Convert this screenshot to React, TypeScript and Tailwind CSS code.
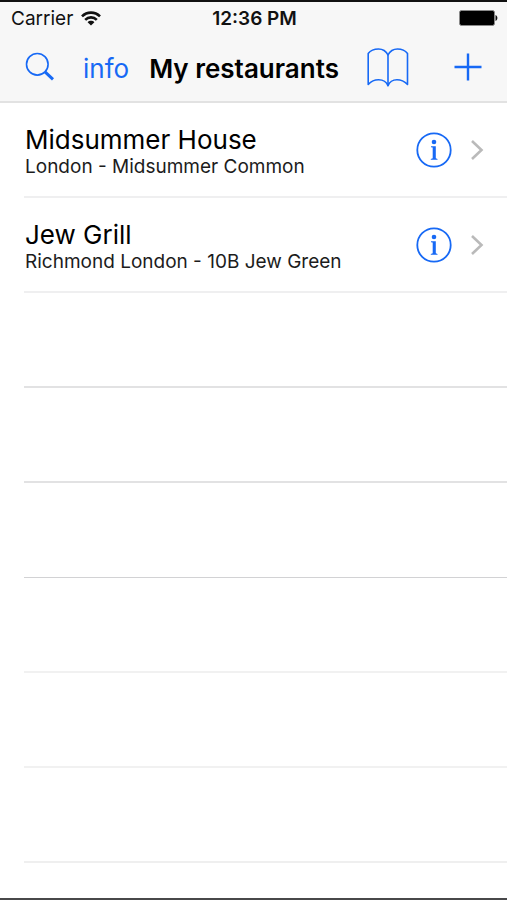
import React from 'react';

type Restaurant = {
  id: number;
  name: string;
  address: string;
};

const restaurants: Restaurant[] = [
  { id: 1, name: 'Midsummer House', address: 'London - Midsummer Common' },
  { id: 2, name: 'Jew Grill', address: 'Richmond London - 10B Jew Green' },
];

const emptyRows = [
  'border-b-2 border-[#e2e2e3]',
  'border-b-2 border-[#e2e2e3]',
  'border-b border-[#d2d2d4]',
  'border-b-2 border-[#f1f1f1]',
  'border-b-2 border-[#f1f1f1]',
  'border-b-2 border-[#efefef]',
];

function WifiIcon() {
  return (
    <svg width="20" height="15" viewBox="0 0 20 15" fill="none" stroke="#111" strokeWidth="2.6" aria-hidden="true">
      <path d="M1 5.4C6 0.4 14 0.4 19 5.4" />
      <path d="M4.2 8.8C7.4 5.6 12.6 5.6 15.8 8.8" />
      <path d="M10 14.4L6.6 11.2C8.4 9.4 11.6 9.4 13.4 11.2Z" fill="#111" stroke="none" />
    </svg>
  );
}

function BatteryIcon() {
  return (
    <svg width="39" height="16" viewBox="0 0 39 16" aria-hidden="true">
      <rect x="0.5" y="0.5" width="35" height="15" rx="2" fill="#000" stroke="#8a8a8a" />
      <path d="M36.5 5C39 6 39 10 36.5 11Z" fill="#111" />
    </svg>
  );
}

function SearchIcon() {
  return (
    <svg width="30" height="30" viewBox="0 0 30 30" fill="none" stroke="#1769f5" aria-hidden="true">
      <circle cx="12.3" cy="12.3" r="10.8" strokeWidth="1.6" />
      <path d="M20 19.8L28 27.4" strokeWidth="3" />
    </svg>
  );
}

function BookIcon() {
  return (
    <svg width="42" height="40" viewBox="0 0 42 40" fill="none" stroke="#1769f5" strokeWidth="1.6" strokeLinejoin="round" aria-hidden="true">
      <path d="M21 8C19 4 15.5 2 11.5 2C7 2 3.5 3.5 1.2 6.5V37.5C4 34.5 7.5 32.8 11.5 32.8C16 32.8 19.5 35 21 38.8C22.5 35 26 32.8 30 32.8C34 32.8 37.5 34.5 40.5 37.5V6.5C38.2 3.5 35 2 30.5 2C26.5 2 23 4 21 8Z" />
      <path d="M21 8V38.8" />
    </svg>
  );
}

function PlusIcon() {
  return (
    <svg width="28" height="28" viewBox="0 0 28 28" fill="none" stroke="#1769f5" strokeWidth="2.4" aria-hidden="true">
      <path d="M14 0.5V27.5M0.5 14H27.5" />
    </svg>
  );
}

function InfoIcon() {
  return (
    <svg width="36" height="36" viewBox="0 0 36 36" fill="none" aria-hidden="true">
      <circle cx="18" cy="18" r="16.7" stroke="#1769f5" strokeWidth="1.8" />
      <circle cx="18" cy="10" r="2.3" fill="#1769f5" />
      <path d="M15 14.2H19.8V26.2L21.5 27V27.8H14.8V27L16.7 26.2V15.6L15 15.2Z" fill="#1769f5" />
    </svg>
  );
}

function ChevronIcon() {
  return (
    <svg width="14" height="22" viewBox="0 0 14 22" fill="none" stroke="#bababa" strokeWidth="2.6" aria-hidden="true">
      <path d="M2 2L11.5 11L2 20" />
    </svg>
  );
}

function StatusBar() {
  return (
    <div className="grid grid-cols-[1fr_auto_1fr] items-center h-8 pl-[11px] pr-[9px] text-[#111]">
      <div className="flex items-center gap-2">
        <span className="pt-0.5 text-[19px] leading-6">Carrier</span>
        <WifiIcon />
      </div>
      <span className="pt-0.5 text-[19px] leading-6 font-semibold">12:36 PM</span>
      <div className="flex justify-end">
        <BatteryIcon />
      </div>
    </div>
  );
}

function NavBar() {
  return (
    <nav className="flex items-center justify-between h-[67px] pb-0.5 px-[25px] text-[#1769f5]">
      <button type="button" aria-label="Search">
        <SearchIcon />
      </button>
      <div className="flex items-center gap-5 pt-1">
        <button type="button" className="text-[26px] leading-8">info</button>
        <h1 className="text-[26px] leading-8 font-semibold text-black whitespace-nowrap">My restaurants</h1>
      </div>
      <div className="flex items-center gap-[45px]">
        <button type="button" aria-label="Bookmarks">
          <BookIcon />
        </button>
        <button type="button" aria-label="Add restaurant">
          <PlusIcon />
        </button>
      </div>
    </nav>
  );
}

function RestaurantRow({ restaurant }: { restaurant: Restaurant }) {
  return (
    <li className="flex items-center h-[95px] ml-6 pr-[23px] border-b-2 border-[#efeff0]">
      <div className="flex-1 pl-px pt-0.5">
        <p className="text-[26px] leading-8 text-black">{restaurant.name}</p>
        <p className="text-[19px] leading-[22px] text-[#1c1c1c]">{restaurant.address}</p>
      </div>
      <div className="flex items-center gap-[18px]">
        <button type="button" aria-label={`Details of ${restaurant.name}`}>
          <InfoIcon />
        </button>
        <ChevronIcon />
      </div>
    </li>
  );
}

export default function App() {
  return (
    <div className="flex flex-col min-h-screen bg-white border-y-2 border-t-[#111] border-b-[#48484a] font-['Inter','Liberation_Sans',sans-serif]">
      <header className="bg-[#f7f7f7] border-b-2 border-[#e2e2e2]">
        <StatusBar />
        <NavBar />
      </header>
      <ul>
        {restaurants.map((restaurant) => (
          <RestaurantRow key={restaurant.id} restaurant={restaurant} />
        ))}
        {emptyRows.map((border, index) => (
          <li key={index} className={`h-[95px] ml-6 ${border}`} />
        ))}
      </ul>
    </div>
  );
}
